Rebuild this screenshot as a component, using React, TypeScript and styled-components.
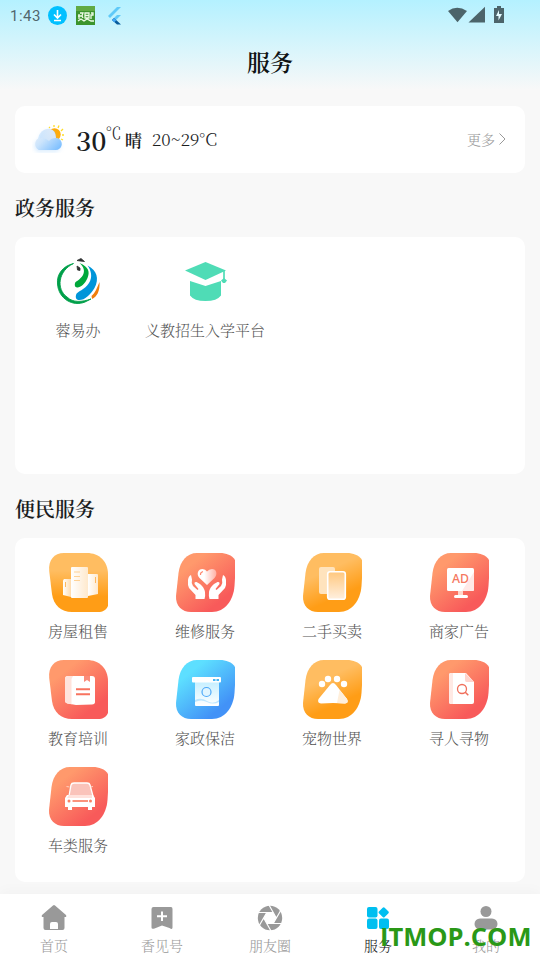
import React from "react";
import styled, { createGlobalStyle } from "styled-components";

const GlobalStyle = createGlobalStyle`
  * { box-sizing: border-box; }
  body {
    margin: 0;
    background: #f8f8f8;
    font-family: "Noto Serif CJK SC", "Noto Serif SC", "Noto Sans CJK SC", serif;
    color: #1b1d1e;
  }
  svg { display: block; overflow: visible; }
`;

const Screen = styled.div`
  position: relative;
  display: flex;
  flex-direction: column;
  width: 540px;
  height: 960px;
  overflow: hidden;
  background: linear-gradient(180deg, #b4f1ff 0, #f8f8f8 90px);
`;

const StatusBar = styled.div`
  display: flex;
  align-items: center;
  height: 32px;
  padding: 0 35px 0 10px;
`;

const Clock = styled.span`
  width: 38px;
  font: 400 15px/32px Roboto, sans-serif;
  letter-spacing: 0.5px;
  color: #51666d;
`;

const StatusSpacer = styled.div`
  flex: 1;
`;

const Header = styled.h1`
  margin: 0;
  height: 74px;
  padding-top: 13px;
  text-align: center;
  font-size: 23px;
  line-height: 34px;
  font-weight: 600;
  color: #101314;
`;

const Content = styled.main`
  display: flex;
  flex-direction: column;
  height: 788px;
  padding: 0 15px;
`;

const Card = styled.section<{ $height: number }>`
  flex: none;
  height: ${(p) => p.$height}px;
  border-radius: 10px;
  background: #fff;
`;

const WeatherCard = styled(Card)`
  display: flex;
  align-items: center;
  padding: 0 18px 0 17px;
`;

const Temperature = styled.div`
  display: flex;
  width: 49px;
  margin-left: 11px;
  font-size: 26.5px;
  line-height: 40px;
  font-weight: 600;
  white-space: nowrap;
`;

const Degree = styled.span`
  margin-top: -7px;
  margin-left: -1px;
  font-size: 16px;
  font-weight: 300;
`;

const Condition = styled.span`
  font-size: 17px;
  font-weight: 600;
`;

const TempRange = styled.span`
  margin-top: -2px;
  margin-left: 10px;
  font-size: 17.3px;
  font-weight: 300;
  flex: 1;
`;

const More = styled.span`
  display: flex;
  align-items: center;
  gap: 4px;
  margin-top: -1px;
  padding-right: 1px;
  font-size: 14px;
  font-weight: 300;
  color: #999;
`;

const SectionTitle = styled.h2<{ $height: number }>`
  flex: none;
  display: flex;
  align-items: center;
  height: ${(p) => p.$height}px;
  margin: 0;
  padding-top: 4px;
  font-size: 20px;
  font-weight: 600;
`;

const ServiceGrid = styled.div<{ $top: number }>`
  display: grid;
  grid-template-columns: repeat(4, 127px);
  grid-auto-rows: 107px;
  padding-top: ${(p) => p.$top}px;
`;

const ServiceItem = styled.div`
  display: flex;
  flex-direction: column;
  align-items: center;
`;

const ServiceLabel = styled.span<{ $nudge?: boolean }>`
  margin-top: 8px;
  padding-right: 1px;
  font-size: 15px;
  line-height: 22px;
  font-weight: 300;
  color: #555;
  white-space: nowrap;
`;

const TabBar = styled.nav`
  display: grid;
  grid-template-columns: repeat(5, 1fr);
  height: 66px;
  background: #fff;
  box-shadow: 0 -4px 12px rgba(0, 0, 0, 0.025);
`;

const Tab = styled.div<{ $active?: boolean }>`
  display: flex;
  flex-direction: column;
  align-items: center;
  padding-top: 9px;
  font-size: 14px;
  line-height: 20px;
  font-weight: 300;
  color: ${(p) => (p.$active ? "#17191a" : "#999")};
  svg { margin-bottom: 2px; }
`;

const Watermark = styled.div`
  position: absolute;
  left: 380px;
  top: 919px;
  font: 700 25.5px/34px "Open Sans", sans-serif;
  color: #2a9817;
  white-space: nowrap;
`;

type Tone = "orange" | "coral" | "blue";
const tones: Record<Tone, [string, string]> = {
  orange: ["#ffbd61", "#ff9d16"],
  coral: ["#ff996c", "#f85a5a"],
  blue: ["#5ddfff", "#4292f7"],
};
const leanRight =
  "M21 0H44C50 0 56 2 59 7V25L58.500 33C57.500 47 49 59 36 59H15C6 59-.5 53 0 43L2.500 20C4 8 11 0 21 0Z";
const leanLeft =
  "M15 0H38C50 0 59 8.500 59 21V53C57 57 54 59 49 59H23C12 59 4.500 52 3 41L.2 18C-.8 7 5 0 15 0Z";

function Tile({ id, tone, left, vertical, children }: {
  id: string; tone: Tone; left?: boolean; vertical?: boolean; children: React.ReactNode;
}) {
  const [from, to] = tones[tone];
  const orange = tone === "orange";
  return (
    <svg width="59" height="59" viewBox="0 0 59 59">
      <defs>
        <linearGradient id={id} x1={vertical ? ".5" : orange ? ".4" : ".25"} y1={orange ? ".3" : ".2"} x2={vertical ? ".5" : orange ? ".6" : ".75"} y2={orange ? ".74" : ".82"}>
          <stop stopColor={from} /><stop offset="1" stopColor={to} />
        </linearGradient>
        <linearGradient id={id + "w"}><stop stopColor="#fff" stopOpacity=".7" /><stop offset=".35" stopColor="#fff" /><stop offset="1" stopColor="#fff" stopOpacity=".88" /></linearGradient>
      </defs>
      <path d={left ? leanLeft : leanRight} fill={`url(#${id})`} />
      {children}
    </svg>
  );
}

const HouseTile = () => (
  <Tile id="house" tone="orange" left vertical>
    <defs>
      <linearGradient id="tower"><stop stopColor="#fff" /><stop offset="1" stopColor="#ffe9cd" /></linearGradient>
      <linearGradient id="wing"><stop stopColor="#fff" /><stop offset="1" stopColor="#ffdcae" /></linearGradient>
    </defs>
    <path d="M14 27.5 15 26H22V44L14 42Z" fill="url(#wing)" />
    <path d="M39 21H48Q49 21 49 22V41L39 43Z" fill="url(#tower)" />
    <rect x="22" y="14" width="17" height="31" rx="1" fill="url(#tower)" />
    <path d="M25 19H31M25 23.5H31M25 27.5H31" stroke="#ffd295" />
    <path d="M16.5 29V34M46.5 24V30" stroke="#ffb85d" />
  </Tile>
);

const RepairTile = () => (
  <Tile id="repair" tone="coral">
    <defs><linearGradient id="heart"><stop offset=".35" stopColor="#fff" /><stop offset="1" stopColor="#ffafa3" /></linearGradient></defs>
    <path d="M31 32 23.5 25C20 21 22 16 26.5 16Q29.5 16 31 18.5Q33 16 36 16C40.5 16 42 21 38.5 25Z" fill="url(#heart)" />
    <path d="M24.5 22Q24 19.5 27 18.5" fill="none" stroke="#ff876e" strokeWidth="1.1" />
    <path d="M15 22Q12.500 23 12 27Q11.500 32 13 35L19.500 42V46H28.500Q29.500 43 29 39Q28 34 24 31L20.500 29Q18 28.500 18.500 31L22.500 36L21.500 37L17 33Q15 30 16 26.500Z" fill="#fff" />
    <path d="M47 22Q49.500 23 50 27Q50.500 32 49 35L42.500 42V46H33.500Q32.500 43 33 39Q34 34 38 31L41.500 29Q44 28.500 43.500 31L39.500 36L40.500 37L45 33Q47 30 46 26.500Z" fill="#fff" />
  </Tile>
);

const SecondHandTile = () => (
  <Tile id="second" tone="orange">
    <defs><linearGradient id="phone" x2="0" y2="1"><stop stopColor="#ffc77e" /><stop offset="1" stopColor="#fff0df" /></linearGradient></defs>
    <rect x="16" y="14" width="16" height="27" rx="2" fill="#ffe3bd" />
    <rect x="24.700" y="18.700" width="17.600" height="27.600" rx="2.300" fill="url(#phone)" stroke="#fff" strokeWidth="1.600" />
  </Tile>
);

const AdTile = () => (
  <Tile id="ad" tone="coral">
    <path d="M28 38H33V43H28Z" fill="#ffd7cb" />
    <rect x="17" y="15" width="27" height="23" rx="1.500" fill="#fff" />
    <path d="M44 19 32 38H42.500Q44 38 44 36Z" fill="#ffe9e7" />
    <rect x="24" y="42" width="14" height="3" rx="1.500" fill="#fff" />
    <text x="22" y="30" fontFamily="Noto Sans, sans-serif" fontSize="12" fontWeight="500" fill="#f57860" textLength="17" lengthAdjust="spacingAndGlyphs">AD</text>
  </Tile>
);

const BookTile = () => (
  <Tile id="book" tone="coral" left>
    <path d="M19 16H43Q46 16 46 19V42Q46 44 43 44.500L27 45 18.500 43.500Q16 43 16 40V19Q16 16 19 16Z" fill="#fff" />
    <path d="M19 16H24L22.500 19V44.200L18.500 43.500Q16 43 16 40V19Q16 16 19 16Z" fill="#ffe3dc" />
    <path d="M35 16H41V22L38 20 35 22Z" fill="#fa8b7a" />
    <path d="M27 29.200H41M27 34.300H41" stroke="#f8735f" strokeWidth="2" />
  </Tile>
);

const CleaningTile = () => (
  <Tile id="clean" tone="blue">
    <defs><linearGradient id="washer" x2="0" y2="1"><stop stopColor="#c6efff" /><stop offset="1" stopColor="#fff" /></linearGradient></defs>
    <path d="M19 22H43V45Q43 46 42 46H20Q19 46 19 45Z" fill="url(#washer)" />
    <path d="M19 40Q25 37 31 41T43 40V42Q37 45 31 42T19 42Z" fill="#bbe5ff" />
    <rect x="16" y="17" width="29" height="5.500" rx="1" fill="#fff" />
    <path d="M37 20H39.500M40.500 20H43" stroke="#48b6f4" strokeWidth="2.200" />
    <circle cx="30.500" cy="32" r="4.500" fill="#e0f5ff" stroke="#4ca8f8" strokeWidth="1.200" />
  </Tile>
);

const PetTile = () => (
  <Tile id="pet" tone="orange">
    <circle cx="19" cy="24" r="3.200" fill="#fff" /><circle cx="25" cy="19" r="3.200" fill="#fff" />
    <circle cx="34" cy="19" r="3.200" fill="#fff" /><circle cx="41" cy="24" r="3.200" fill="#fff" />
    <path d="M27 25Q30 21 33 25L44 39Q46 43 42 43.500L30 43 18 43.500Q14 43 15.500 39Z" fill="#fff" />
    <path d="M36.500 30 44 39Q46 43 42 43.500L34 43Z" fill="#ffefdb" />
  </Tile>
);

const SearchTile = () => (
  <Tile id="search" tone="coral">
    <path d="M21 13H36L44 22V42Q44 44 42 44H21Q19 44 19 42V15Q19 13 21 13Z" fill="#fff" />
    <path d="M19 15Q19 13 21 13H23V44H21Q19 44 19 42Z" fill="#ffe9e4" />
    <path d="M35 13 44 22H36.500Q35 22 35 20Z" fill="#ffd4cd" />
    <circle cx="32" cy="29" r="4.500" fill="none" stroke="#f06f5b" strokeWidth="1.300" />
    <path d="m35 32 3.300 3.300" stroke="#f06f5b" strokeWidth="1.500" />
  </Tile>
);

const CarTile = () => (
  <Tile id="car" tone="coral">
    <path d="M19 43h4v-3h-4zM39 43h4v-3h-4z" fill="#fff" />
    <path d="M20 29 22 18Q22.500 16 25 16H38Q40.500 16 41 18L44 29Z" fill="#fac3ba" stroke="#fff" strokeWidth="1.300" />
    <path d="M17.500 19.500 20.500 20M44 19.500 41.500 20" stroke="#ffd0bf" />
    <path d="M18 28H44L46 31V40H16V31Z" fill="#fff" />
    <path d="M20 28H43V31H18Z" fill="#ffe2dc" />
    <path d="M23.500 34H39" stroke="#f98065" strokeWidth="1.700" />
    <circle cx="20" cy="34" r="1.500" fill="#f98065" /><circle cx="41.500" cy="34" r="1.500" fill="#f98065" />
  </Tile>
);

const RongLogo = () => (
  <svg width="59" height="59" viewBox="0 0 59 59">
    <path d="M24.500 11.500C14 14 7.500 22 8.500 32C9.500 47 24 55 36 50L42 47C33 50 24 51 18 45C7 37 9 19 24.500 11.500Z" fill="#009f49" stroke="#009f49" strokeWidth=".9" />
    <path d="M30.500 11C40 15 41 20 38.500 26C36 32 31 36 28 35.500Q25 35 26 31C27 29 31 28 34 23C36 19 35 15 30.500 11Z" fill="#00a83b" />
    <path d="M38.500 13.500C48 18 50.500 27 45.500 36C41 43 35 49 29 48Q26 47 27 43C28 39 36 38 40 31C44 25 42 18 38.500 13.500Z" fill="#0095d9" />
    <path d="M50.500 30C51 39 48 45 43 47L42.500 44C46 41 48 36 50.500 30Z" fill="#f07e0a" />
    <path d="M28 8.500 32 6.500 35.500 9.500 31 9ZM28 14 31 16V18.500L28.500 18Z" fill="#303232" stroke="#303232" strokeWidth=".8" />
  </svg>
);

const GraduationCap = () => (
  <svg width="59" height="59" viewBox="0 0 59 59" fill="#4fdcb6">
    <path d="M9 18.500 29.500 10 50 18.500 29.500 28Z" />
    <path d="M14 29 29.500 34 45 29V43.500Q41 49 29.500 49T14 43.500Z" />
    <path d="M48 18V28" stroke="#4fdcb6" strokeWidth="1.700" />
    <path d="M48 26 51 28.500 49 31H47L45 28.500Z" />
  </svg>
);

const WeatherIcon = () => (
  <svg width="33" height="33" viewBox="0 0 33 33">
    <defs>
      <linearGradient id="cloud" x2="1" y2=".8"><stop stopColor="#eef3fa" /><stop offset=".45" stopColor="#cbe4fc" /><stop offset="1" stopColor="#7dbfff" /></linearGradient>
      <linearGradient id="puff"><stop stopColor="#c5e3ff" /><stop offset="1" stopColor="#e9edf4" /></linearGradient>
      <filter id="cloudShade"><feDropShadow dx="-1" dy="2" stdDeviation="2" floodColor="#a7d3fc" floodOpacity=".4" /></filter>
    </defs>
    <g transform="translate(0 1)">
      <path d="M22 3V1M26 4 27 1.500M29 7 31 5M30 11H32M29 15 31 16M18 4 17 3" stroke="#ffdd25" strokeWidth="1.300" />
      <circle cx="22.500" cy="10.500" r="6.200" fill="#ffab0b" />
      <path d="M6 25.500C2 23 2 15 8 14C9 8 13 4 18 5Q24 6 24 14C30 14 32 22 27 25Q26 26 24 26H8Q6 26 6 25.500Z" fill="url(#cloud)" filter="url(#cloudShade)" />
      <path d="M6 15Q8 5 16 5Q23 5 24 14Q19 14 17 17Q12 12 6 15Z" fill="url(#puff)" opacity=".75" />
    </g>
  </svg>
);

const StatusIcons = () => (
  <>
    <svg width="75" height="20" viewBox="0 0 75 20">
      <circle cx="9.500" cy="9.500" r="9.500" fill="#00c0ff" />
      <path d="M9.500 4V12M6 8.500 9.500 12 13 8.500M6 14.500H13" fill="none" stroke="#fff" strokeWidth="1.600" />
      <rect x="28" y="0" width="19" height="19" fill="#3c942d" />
      <rect x="28" y="0" width="19" height="5" fill="#61aa43" />
      <path d="M32 7H35L34 10 35 12M30 10H34M31 13V8M37 7H41V12H37ZM37 9.500H41M43 7H45V9H43V13M30 15 33 13 36 15 39 13 43 15H46" fill="none" stroke="#eefbe6" strokeWidth="1.300" />
      <path d="M60 10 69 1H73L62 12Z" fill="#5fc9f8" />
      <path d="M64 14 69 9H73L66 16Z" fill="#5fc9f8" />
      <path d="m64 14 2-2 7 6.500H69Z" fill="#075b9c" />
      <path d="m64 14 2-2 2.300 2.300-2 2Z" fill="#42a5f5" />
    </svg>
    <StatusSpacer />
    <svg width="57" height="20" viewBox="0 0 57 20" fill="#4c646a">
      <path d="M0 5Q9 -1.500 19 5L9.500 16.300Z" />
      <path d="M20.500 16.500 37 .7V16.500Z" />
      <path d="M46 2H49V0H53V2H56V17H46Z" />
      <path d="M51 4 48 10H50.500V14.500L54 8H51Z" fill="#e4fbff" />
    </svg>
  </>
);

const HomeIcon = () => (
  <svg width="26" height="30" viewBox="0 0 26 30"><path d="M12 2.500Q13 1.500 14 2.500L25 12Q26 14 24 14H23.500V25Q23.500 27 21.500 27H4.500Q2.500 27 2.500 25V14H2Q0 14 1 12Z" fill="#999" /><path d="M9 26V21Q9 19 11 19H15Q17 19 17 21V26Z" fill="#fff" /></svg>
);
const BookmarkIcon = () => (
  <svg width="26" height="30" viewBox="0 0 26 30"><path d="M4.500 4H22Q23.500 4 23.500 6V24.500Q23.500 27 20.500 25L13 22.500 5.500 25.500Q2.500 26.500 2.500 24.500V6Q2.500 4 4.500 4Z" fill="#999" /><path d="M13 8.500V18M8 13.200H18" stroke="#fff" strokeWidth="2" /></svg>
);
const ApertureIcon = () => (
  <svg width="26" height="30" viewBox="0 0 26 30"><circle cx="13" cy="15" r="12.200" fill="#999" /><path d="M9.800 9.500H16.200L19.300 15 16.200 20.500H9.800L6.700 15Z" fill="#fff" /><path d="M16.200 9.500H1.500M19.300 15 12 2M16.200 20.500 24 7M9.800 20.500H24.500M6.700 15 14 28M9.800 9.500 2 23" stroke="#fff" strokeWidth="1.200" /></svg>
);
const ServicesIcon = () => (
  <svg width="26" height="30" viewBox="0 0 26 30" fill="#00bff0"><rect x="2" y="4" width="10.500" height="10.500" rx="2" /><path d="M17.700 4.700Q18.700 3.700 19.700 4.700L23.500 8.500Q24.300 9.300 23.500 10.200L19.700 14Q18.700 15 17.700 14L13.900 10.200Q13 9.300 13.900 8.500Z" /><rect x="2" y="15.500" width="10.500" height="10.500" rx="2" /><rect x="14" y="15.500" width="10" height="10.500" rx="2" /></svg>
);
const ProfileIcon = () => (
  <svg width="26" height="30" viewBox="0 0 26 30" fill="#999"><circle cx="13" cy="8.500" r="5.500" /><rect x="1.500" y="15.500" width="23" height="11" rx="5.500" /></svg>
);

const publicServices = [
  { label: "房屋租售", Icon: HouseTile },
  { label: "维修服务", Icon: RepairTile },
  { label: "二手买卖", Icon: SecondHandTile },
  { label: "商家广告", Icon: AdTile },
  { label: "教育培训", Icon: BookTile },
  { label: "家政保洁", Icon: CleaningTile },
  { label: "宠物世界", Icon: PetTile },
  { label: "寻人寻物", Icon: SearchTile },
  { label: "车类服务", Icon: CarTile },
];
const governmentServices = [
  { label: "蓉易办", Icon: RongLogo },
  { label: "义教招生入学平台", Icon: GraduationCap },
];
const tabs = [
  { label: "首页", Icon: HomeIcon },
  { label: "香见号", Icon: BookmarkIcon },
  { label: "朋友圈", Icon: ApertureIcon },
  { label: "服务", Icon: ServicesIcon, active: true },
  { label: "我的", Icon: ProfileIcon },
];

function Services({ items, top }: { items: typeof publicServices; top: number }) {
  return (
    <ServiceGrid $top={top}>
      {items.map(({ label, Icon }) => (
        <ServiceItem key={label}><Icon /><ServiceLabel>{label}</ServiceLabel></ServiceItem>
      ))}
    </ServiceGrid>
  );
}

export default function App() {
  return (
    <>
      <GlobalStyle />
      <Screen>
        <StatusBar><Clock>1:43</Clock><StatusIcons /></StatusBar>
        <Header>服务</Header>
        <Content>
          <WeatherCard $height={67}>
            <WeatherIcon />
            <Temperature>30<Degree>℃</Degree></Temperature>
            <Condition>晴</Condition>
            <TempRange>20~29°C</TempRange>
            <More>更多<svg width="7" height="12" viewBox="0 0 7 12"><path d="m.5.5 5.500 5.500-5.500 5.500" fill="none" stroke="#999" /></svg></More>
          </WeatherCard>
          <SectionTitle $height={64}>政务服务</SectionTitle>
          <Card $height={237}><Services items={governmentServices} top={15} /></Card>
          <SectionTitle $height={64}>便民服务</SectionTitle>
          <Card $height={344}><Services items={publicServices} top={15} /></Card>
        </Content>
        <TabBar>
          {tabs.map(({ label, Icon, active }) => <Tab key={label} $active={active}><Icon />{label}</Tab>)}
        </TabBar>
        <Watermark>ITMOP.COM</Watermark>
      </Screen>
    </>
  );
}
